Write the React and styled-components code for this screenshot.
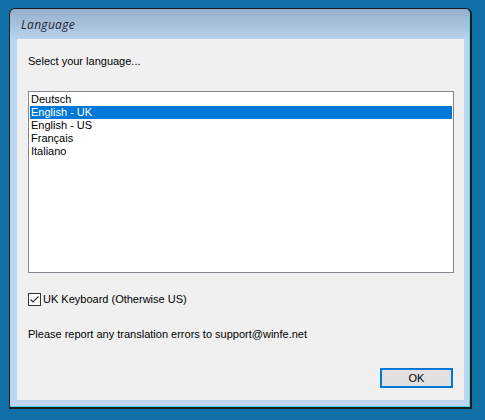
import React, { useState } from 'react'
import styled, { createGlobalStyle } from 'styled-components'

const GlobalStyle = createGlobalStyle`
  html, body {
    margin: 0;
    padding: 0;
    background: #1071a9;
  }
  body {
    width: 485px;
    height: 420px;
    overflow: hidden;
  }
`;

const languages = ['Deutsch', 'English - UK', 'English - US', 'Français', 'Italiano']

const Desktop = styled.div`
  width: 485px;
  height: 420px;
  padding: 8px 0 0 9px;
  box-sizing: border-box;
  background: #1071a9;
`;

const Window = styled.div`
  width: 463px;
  height: 401px;
  box-sizing: border-box;
  border-style: solid;
  border-color: #1c1c1c;
  border-width: 1px 2px 2px 1px;
  border-radius: 6px 6px 0 0;
  padding: 0 6px 7px 7px;
  display: flex;
  flex-direction: column;
  background: linear-gradient(180deg, #94afcd 0px, #b9d2eb 30px, #bdd5ed 31px, #bdd5ed 100%);
  box-shadow: inset -1px -1px 0 #48d8ec;
`;

const TitleBar = styled.div`
  height: 30px;
  flex: none;
  display: flex;
  align-items: center;
  padding-left: 4px;
  font-family: "Open Sans", "DejaVu Sans", sans-serif;
  font-style: italic;
  font-size: 12px;
  color: #1b2535;
  letter-spacing: 0.3px;
`;

const Client = styled.div`
  width: 447px;
  height: 361px;
  box-sizing: border-box;
  background: #f0f0f0;
  padding: 16px 10px 0 11px;
  display: flex;
  flex-direction: column;
  font-family: Tahoma, "Liberation Sans", "DejaVu Sans", sans-serif;
  font-size: 11px;
  color: #000;
`;

const Label = styled.div`
  height: 13px;
  line-height: 13px;
  margin-top: ${p => p.$top || 0}px;
`;

const ListBox = styled.div`
  margin-top: 23px;
  width: 426px;
  height: 182px;
  box-sizing: border-box;
  border: 1px solid #828790;
  background: #fff;
  padding: 1px;
`;

const Item = styled.div`
  height: 13px;
  line-height: 13px;
  padding-left: 1px;
  white-space: nowrap;
  background: ${p => (p.$selected ? '#0078d7' : 'transparent')};
  color: ${p => (p.$selected ? '#fff' : '#000')};
  cursor: default;
`;

const CheckRow = styled.label`
  margin-top: 20px;
  display: flex;
  align-items: center;
  gap: 2px;
  height: 13px;
  line-height: 13px;
`;

const Box = styled.span`
  width: 13px;
  height: 13px;
  box-sizing: border-box;
  border: 1px solid #333;
  background: #fff;
  display: flex;
  align-items: center;
  justify-content: center;
  flex: none;
`;

const Footer = styled.div`
  margin-top: 27px;
  display: flex;
  justify-content: flex-end;
`;

const OkButton = styled.button`
  width: 73px;
  height: 20px;
  margin-right: 1px;
  box-sizing: border-box;
  border: 2px solid #0078d7;
  background: #e1e1e1;
  font-family: Tahoma, "Liberation Sans", "DejaVu Sans", sans-serif;
  font-size: 11px;
  color: #000;
  padding: 0;
  line-height: 16px;
`;

export default function App() {
  const [selected, setSelected] = useState(1)
  const [uk, setUk] = useState(true)
  return (
    <Desktop>
      <GlobalStyle />
      <Window>
        <TitleBar>Language</TitleBar>
        <Client>
          <Label>Select your language...</Label>
          <ListBox>
            {languages.map((l, i) => (
              <Item key={l} $selected={i === selected} onClick={() => setSelected(i)}>
                {l}
              </Item>
            ))}
          </ListBox>
          <CheckRow onClick={() => setUk(!uk)}>
            <Box>
              {uk && (
                <svg width="11" height="11" viewBox="0 0 11 11">
                  <path d="M1.5 5.5 L4 8 L9.5 2.5" fill="none" stroke="#333" strokeWidth="1.2" />
                </svg>
              )}
            </Box>
            UK Keyboard (Otherwise US)
          </CheckRow>
          <Label $top={22}>Please report any translation errors to support@winfe.net</Label>
          <Footer>
            <OkButton>OK</OkButton>
          </Footer>
        </Client>
      </Window>
    </Desktop>
  )
}
